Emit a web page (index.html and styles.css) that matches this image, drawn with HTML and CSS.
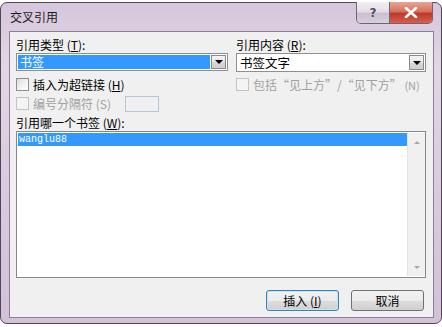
FILE: index.html
```html
<!DOCTYPE html>
<html lang="zh">
<head>
<meta charset="utf-8">
<title>交叉引用</title>
<link rel="stylesheet" href="styles.css">
</head>
<body>
<div class="window">
  <div class="titlebar">
    <span class="title">交叉引用</span>
    <div class="caption-btns">
      <div class="cap help">?</div>
      <div class="cap close">
        <svg width="14" height="11" viewBox="0 0 14 11"><path d="M2 1 L12 10 M12 1 L2 10" stroke="#ffffff" stroke-width="2.6" stroke-linecap="round"/></svg>
      </div>
    </div>
  </div>
  <div class="content">
    <div class="columns">
      <div class="col left">
        <div class="label">引用类型 (<u>T</u>):</div>
        <div class="combo">
          <div class="combo-text selected">书签</div>
          <div class="combo-btn"><span class="arrow"></span></div>
        </div>
        <div class="check-row first">
          <span class="box"></span><span>插入为超链接 (<u>H</u>)</span>
        </div>
        <div class="check-row second disabled">
          <span class="box"></span><span>编号分隔符 (S)</span><span class="sepbox"></span>
        </div>
      </div>
      <div class="col right">
        <div class="label">引用内容 (<u>R</u>):</div>
        <div class="combo tall">
          <div class="combo-text">书签文字</div>
          <div class="combo-btn"><span class="arrow"></span></div>
        </div>
        <div class="check-row first disabled">
          <span class="box"></span><span>包括“见上方”/“见下方” <span class="small">(N)</span></span>
        </div>
      </div>
    </div>
    <div class="label list-label">引用哪一个书签 (<u>W</u>):</div>
    <div class="listbox">
      <div class="items">
        <div class="item selected">wanglu88</div>
      </div>
      <div class="scrollbar">
        <span class="sarrow up"></span>
        <span class="sarrow down"></span>
      </div>
    </div>
    <div class="buttons">
      <div class="btn default">插入 (<u>I</u>)</div>
      <div class="btn">取消</div>
    </div>
  </div>
</div>
</body>
</html>
```

FILE: styles.css
```css
html, body {
  margin: 0;
  padding: 0;
  background: #ffffff;
}
body {
  width: 442px;
  height: 327px;
  overflow: hidden;
  font-family: "Noto Sans CJK SC", "Noto Sans", sans-serif;
  font-size: 12px;
  color: #000;
}
u {
  text-decoration-thickness: 1px;
}
.window {
  margin-top: 2px;
  width: 442px;
  height: 322px;
  box-sizing: border-box;
  border: 1px solid #4f4854;
  border-radius: 7px;
  background: linear-gradient(180deg, #d6c6dc 0%, #e2d6e6 20%, #d9cadf 60%, #d2c1d8 100%);
  display: flex;
  flex-direction: column;
}
.titlebar {
  height: 28px;
  display: flex;
  align-items: flex-start;
  flex-shrink: 0;
}
.title {
  padding: 5px 0 0 9px;
  line-height: 18px;
  font-size: 12px;
  color: #1a1a1a;
}
.caption-btns {
  margin-left: auto;
  margin-right: 8px;
  margin-top: -1px;
  display: flex;
  height: 21px;
  border: 1px solid #6f6475;
  border-top: none;
  border-radius: 0 0 5px 5px;
  overflow: hidden;
}
.cap {
  height: 21px;
  display: flex;
  align-items: center;
  justify-content: center;
}
.help {
  width: 32px;
  background: linear-gradient(180deg, #f2eef4 0%, #e4dde8 45%, #c9bfcf 55%, #d8d0dc 100%);
  border-right: 1px solid #6f6475;
  font-family: "DejaVu Sans", sans-serif;
  font-weight: bold;
  font-size: 12px;
  color: #4a4a5a;
  text-shadow: 0 0 1px #fff;
}
.close {
  width: 42px;
  background: linear-gradient(180deg, #e8a596 0%, #d6725f 45%, #c0392a 55%, #d4604c 100%);
}
.content {
  margin: 0 7px 5px 8px;
  flex: 1;
  border: 1px solid #8b8196;
  background: #f0f0f0;
  padding: 5px 7px 6px 6px;
  display: flex;
  flex-direction: column;
}
.columns {
  display: grid;
  grid-template-columns: 212px 190px;
  column-gap: 8px;
}
.col {
  display: flex;
  flex-direction: column;
}
.label {
  height: 15px;
  line-height: 15px;
  margin-bottom: 1px;
  white-space: nowrap;
}
.combo {
  height: 18px;
  box-sizing: border-box;
  border: 1px solid #8e8f8f;
  background: #fff;
  display: flex;
  padding: 1px;
}
.combo.tall {
  height: 19px;
}
.combo-text {
  flex: 1;
  line-height: 14px;
  padding-left: 2px;
}
.combo.tall .combo-text {
  line-height: 15px;
  font-size: 12.5px;
}
.combo-text.selected {
  background: #3399ff;
  color: #fff;
}
.combo-btn {
  width: 15px;
  margin-left: 1px;
  box-sizing: border-box;
  border: 1px solid #8a8a8a;
  background: linear-gradient(180deg, #f4f4f4 0%, #e6e6e6 50%, #d6d6d6 51%, #cfcfcf 100%);
  display: flex;
  align-items: center;
  justify-content: center;
}
.arrow {
  width: 0;
  height: 0;
  border-left: 4px solid transparent;
  border-right: 4px solid transparent;
  border-top: 4px solid #000;
}
.check-row {
  display: flex;
  align-items: center;
  white-space: nowrap;
}
.check-row.first {
  margin-top: 6px;
  height: 15px;
}
.combo.tall + .check-row.first {
  margin-top: 5px;
}
.check-row.second {
  margin-top: 3px;
  height: 17px;
}
.small {
  font-size: 11px;
}
.box {
  width: 13px;
  height: 13px;
  box-sizing: border-box;
  border: 1px solid #8e8f8f;
  background: linear-gradient(135deg, #dcdcdc 0%, #f4f4f4 60%, #ffffff 100%);
  margin-right: 4px;
  flex-shrink: 0;
}
.disabled {
  color: #a0a0a0;
}
.disabled .box {
  border-color: #c4c4c4;
  background: #f4f4f4;
}
.sepbox {
  width: 34px;
  height: 16px;
  box-sizing: border-box;
  margin-left: 14px;
  border: 1px solid #b5c6d8;
  background: #f0f0f0;
}
.list-label {
  margin-top: 3px;
}
.listbox {
  height: 147px;
  box-sizing: border-box;
  border: 1px solid #828790;
  background: #fff;
  display: flex;
  padding: 1px 0 1px 1px;
}
.items {
  flex: 1;
}
.item {
  height: 13px;
  line-height: 13px;
  padding-left: 1px;
  font-family: "Liberation Mono", "DejaVu Sans Mono", monospace;
  font-size: 10px;
}
.item.selected {
  background: #3399ff;
  color: #fff;
}
.scrollbar {
  width: 17px;
  background: #f0f0f0;
  border-left: 1px solid #e4e4e4;
  display: flex;
  flex-direction: column;
  justify-content: space-between;
  align-items: center;
  padding: 8px 0 7px;
}
.sarrow {
  width: 0;
  height: 0;
  border-left: 3px solid transparent;
  border-right: 3px solid transparent;
}
.sarrow.up {
  border-bottom: 3px solid #a8a8a8;
}
.sarrow.down {
  border-top: 3px solid #a8a8a8;
}
.buttons {
  margin-top: 12px;
  display: flex;
  justify-content: flex-end;
  gap: 12px;
  padding-right: 2px;
}
.btn {
  width: 73px;
  height: 21px;
  box-sizing: border-box;
  border: 1px solid #707070;
  border-radius: 3px;
  background: linear-gradient(180deg, #f2f2f2 0%, #ebebeb 50%, #dddddd 51%, #cfcfcf 100%);
  display: flex;
  align-items: center;
  justify-content: center;
  line-height: 14px;
}
.btn.default {
  border-color: #3c7fb1;
  box-shadow: inset 0 0 0 1px #c4e5f6;
}
```
